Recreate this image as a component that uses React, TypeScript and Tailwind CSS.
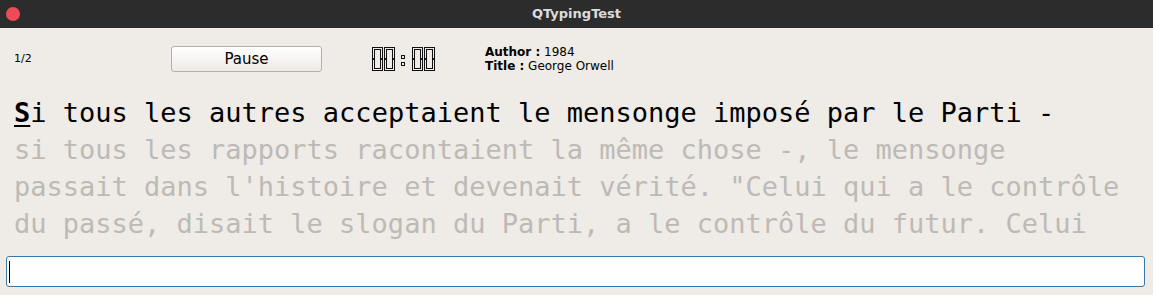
import type { FC } from "react";

const lines = [
	"si tous les rapports racontaient la même chose -, le mensonge",
	"passait dans l'histoire et devenait vérité. \"Celui qui a le contrôle",
	"du passé, disait le slogan du Parti, a le contrôle du futur. Celui",
];

// hollow seven-segment "0": an open-bottom top half and an open-top bottom half
const Digit: FC<{ x: number }> = ({ x }) => (
	<g transform={`translate(${x} 0)`} fill="none" stroke="#111" strokeWidth="1" shapeRendering="crispEdges">
		<path d="M0.5 0.5 H10.5 V11.5 H8.5 V2.5 H2.5 V11.5 H0.5 Z" />
		<path d="M0.5 12.5 H2.5 V21.5 H8.5 V12.5 H10.5 V23.5 H0.5 Z" />
	</g>
);

const Clock: FC = () => (
	<svg width="64" height="25" viewBox="0 0 64 25">
		<Digit x={0} />
		<Digit x={12} />
		<rect x="29.5" y="8.5" width="3" height="3" fill="none" stroke="#111" strokeWidth="1" shapeRendering="crispEdges" />
		<rect x="29.5" y="15.5" width="3" height="3" fill="none" stroke="#111" strokeWidth="1" shapeRendering="crispEdges" />
		<Digit x={40} />
		<Digit x={52} />
	</svg>
);

export default function App() {
	return (
		<div className="w-[1153px] h-[295px] bg-[#efebe7] overflow-hidden flex flex-col font-['DejaVu_Sans',sans-serif]">
			{/* Title bar */}
			<div className="h-[28px] bg-[#2c2c2c] flex items-center relative shrink-0">
				<div className="ml-[6px] w-[14px] h-[14px] rounded-full bg-[#ef4b55]" />
				<span className="absolute left-0 right-0 text-center text-[13px] font-bold text-[#dcdcdc]">
					QTypingTest
				</span>
			</div>

			{/* Header */}
			<div className="h-[62px] flex items-center shrink-0">
				<span className="ml-[14px] w-[157px] text-[11px] text-black">1/2</span>
				<button className="w-[151px] h-[26px] rounded-[3px] border border-[#b3afab] bg-gradient-to-b from-white to-[#eceae7] text-[15px] text-black leading-none">
					Pause
				</button>
				<div className="ml-[50px] mt-[1px] flex">
					<Clock />
				</div>
				<div className="ml-[49px] flex flex-col text-[12px] leading-[14px] text-black">
					<span>
						<b>Author :</b> 1984
					</span>
					<span>
						<b>Title :</b> George Orwell
					</span>
				</div>
			</div>

			{/* Text */}
			<div className="mt-[4px] pl-[14px] font-['DejaVu_Sans_Mono',monospace] text-[27px] leading-[37px] whitespace-pre shrink-0">
				<div className="h-[37px] text-black">
					<span className="font-bold underline underline-offset-[3px] decoration-2">S</span>
					i tous les autres acceptaient le mensonge imposé par le Parti -
				</div>
				{lines.map((l) => (
					<div key={l} className="h-[37px] text-[#bdbab6]">
						{l}
					</div>
				))}
			</div>

			{/* Input */}
			<div className="relative mt-[14px] ml-[6px] w-[1139px] h-[31px] shrink-0">
				<input className="w-full h-full bg-white border border-[#3a76a8] rounded-[3px] outline-none px-[2px] text-[15px]" />
				<span className="absolute left-[3px] top-[5px] w-px h-[22px] bg-black" />
			</div>
		</div>
	);
}
